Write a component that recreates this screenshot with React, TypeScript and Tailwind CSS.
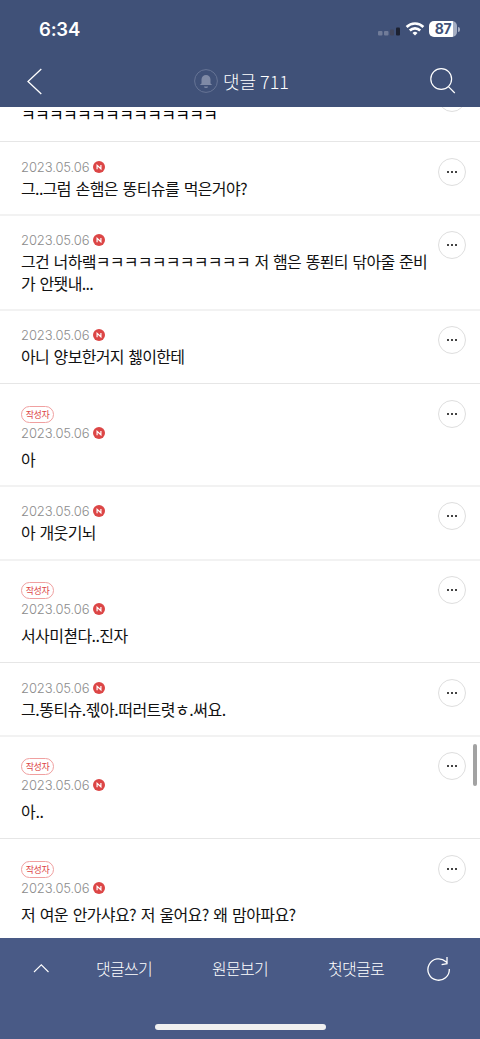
type Comment = {
  height: string;
  text: string;
  writer?: boolean;
  border?: string;
  tracking?: string;
};

const thin = "border-t border-[#e6e6e6]";
const soft = "border-t-2 border-[#f2f2f2]";

const comments: Comment[] = [
  { height: "h-[73px]", border: thin, text: "그..그럼 손햄은 똥티슈를 먹은거야?", tracking: "tracking-[-0.62px]" },
  {
    height: "h-[95px]",
    border: soft,
    text: "그건 너하랰ㅋㅋㅋㅋㅋㅋㅋㅋㅋㅋㅋ 저 햄은 똥푄티 닦아줄 준비\n가 안됏내...",
  },
  { height: "h-[74px]", border: soft, text: "아니 양보한거지 쳃이한테" },
  { height: "h-[102px]", border: thin, text: "아", writer: true },
  { height: "h-[74px]", border: soft, text: "아 개웃기뇌" },
  { height: "h-[103px]", border: soft, text: "서사미쳗다..진자", writer: true, tracking: "tracking-[-0.6px]" },
  { height: "h-[73px]", border: thin, text: "그.똥티슈.젟아.떠러트렷ㅎ.써요.", tracking: "tracking-[-0.5px]" },
  { height: "h-[103px]", border: soft, text: "아..", writer: true, tracking: "tracking-[-0.3px]" },
  {
    height: "h-[100px]",
    border: thin,
    text: "저 여운 안가샤요? 저 울어요? 왜 맘아파요?",
    writer: true,
    tracking: "tracking-[-0.62px]",
  },
];

function MoreButton() {
  return (
    <button className="flex h-7 w-7 shrink-0 items-center justify-center gap-[2px] rounded-full border border-[#dedede]">
      <span className="h-[2px] w-[2px] bg-[#444]" />
      <span className="h-[2px] w-[2px] bg-[#444]" />
      <span className="h-[2px] w-[2px] bg-[#444]" />
    </button>
  );
}

function NewIcon() {
  return (
    <svg width="12" height="12" viewBox="0 0 12 12" fill="none">
      <circle cx="6" cy="6" r="6" fill="#dc4646" />
      <path d="M4.1 8.2V4.4L7.9 7.8V4" stroke="#fff" strokeWidth="1.2" />
    </svg>
  );
}

function CommentItem({ height, text, writer, border, tracking = "tracking-[-0.7px]" }: Comment) {
  return (
    <li className={`shrink-0 ${height}`}>
      <div className={`h-[2px] ${border}`} />
      <div className="flex justify-between pl-[21px] pr-[14px]">
        <div className={writer ? "pt-[21px]" : "pt-[14px]"}>
          {writer && (
            <span className="flex h-[17px] w-[33px] items-center justify-center rounded-full border border-[#f0a0a0] text-[9px] leading-none tracking-[-0.5px] text-[#dc4646]">
              작성자
            </span>
          )}
          <div className="flex h-5 items-center gap-1">
            <span className="w-[68px] font-[Inter] text-[13px] leading-5 font-light tracking-[-0.1px] text-[#8c8c8c]">
              2023.05.06
            </span>
            <NewIcon />
          </div>
          <p
            className={`text-[16px] leading-[22px] [word-spacing:1.7px] whitespace-pre text-[#111] ${tracking} ${
              writer ? "mt-[5px]" : ""
            }`}
          >
            {text}
          </p>
        </div>
        <div className="pt-[15px]">
          <MoreButton />
        </div>
      </div>
    </li>
  );
}

function StatusBar() {
  return (
    <div className="flex h-[58px] items-center justify-between pr-[20px] pl-[39px]">
      <span className="font-[Inter] text-[18.5px] leading-none font-semibold tracking-[-0.2px]">6:34</span>
      <div className="flex items-center">
        <svg width="23" height="16" viewBox="0 0 23 16">
          <rect x="0" y="10" width="4.5" height="4.5" rx="1" fill="#717c99" />
          <rect x="6" y="10" width="4.5" height="4.5" rx="1" fill="#717c99" />
          <rect x="12" y="8.5" width="4" height="6" rx="1" fill="#43485f" />
          <rect x="18" y="6.5" width="4" height="8" rx="1" fill="#1c2131" />
        </svg>
        <svg className="ml-[4px]" width="20" height="16" viewBox="0 0 20 16" fill="none" stroke="#fff" strokeWidth="2.6">
          <path d="M1.6 6a12 12 0 0 1 16.8 0" />
          <path d="M4.8 9.5a7.4 7.4 0 0 1 10.4 0" />
          <path d="M10 14.4 7.5 11.9a3.6 3.6 0 0 1 5 0z" fill="#fff" stroke="none" />
        </svg>
        <div className="ml-[4px] flex h-4 w-[28px] items-center justify-center rounded-[5px] bg-linear-to-r from-white from-87% to-[#a4adc2] to-87% font-[Inter] text-[14px] leading-none font-bold tracking-[-0.3px] text-[#405178]">
          87
        </div>
        <div className="ml-[1px] h-[5px] w-[2px] rounded-r-full bg-[#a4adc2]" />
      </div>
    </div>
  );
}

function Header() {
  return (
    <header className="h-[107px] shrink-0 bg-[#405178] text-white">
      <StatusBar />
      <div className="flex h-[46px] items-center justify-between pr-[24px] pl-[27px]">
        <svg width="26" height="28" viewBox="0 0 26 28" fill="none" stroke="#fff" strokeWidth="1.3">
          <path d="M14.3 2 1 14.5 14.3 27" />
        </svg>
        <h1 className="flex items-center gap-[5px] text-[18px] leading-6 font-light">
          <svg width="24" height="24" viewBox="0 0 24 24">
            <circle cx="12" cy="12" r="11.4" fill="none" stroke="#667495" />
            <path d="M7.5 14.5V10.5a4.5 4.5 0 0 1 9 0v4l1.3 1v.6H6.2v-.6zM10 17.4h4a2 1.6 0 0 1-4 0z" fill="#7f8aa6" />
          </svg>
          <span className="whitespace-pre">댓글 711</span>
        </h1>
        <svg width="26" height="26" viewBox="0 0 26 26" fill="none" stroke="#fff" strokeWidth="1.2">
          <circle cx="11.2" cy="11" r="10.4" />
          <path d="M18.2 18.4 24.8 25" />
        </svg>
      </div>
    </header>
  );
}

function BottomBar() {
  return (
    <footer className="flex h-[101px] shrink-0 flex-col items-center bg-[#495a86] text-white">
      <nav className="flex h-[62px] w-full items-center pl-[33px] text-[16px] font-light tracking-[-0.7px]">
        <svg width="16" height="10" viewBox="0 0 16 10" fill="none" stroke="#fff" strokeWidth="1.1">
          <path d="M1 8 8.3 .8 15.5 8" />
        </svg>
        <span className="mb-[2px] ml-[47px] w-[116px]">댓글쓰기</span>
        <span className="mb-[2px] w-[116px]">원문보기</span>
        <span className="mb-[2px] w-[99px]">첫댓글로</span>
        <svg width="24" height="26" viewBox="0 0 24 26" fill="none" stroke="#fff" strokeWidth="1.3">
          <path d="M22.3 13a10.7 10.7 0 1 1-3.3-7.2l1.5 1.6M20 1v6.6l-5.4 1" />
        </svg>
      </nav>
      <div className="mt-[24px] h-[6px] w-[171px] rounded-full bg-[#f0f0f0]" />
    </footer>
  );
}

export default function App() {
  return (
    <div className="relative flex h-[1039px] w-[480px] flex-col overflow-hidden bg-white font-['Noto_Sans_CJK_KR',sans-serif]">
      <Header />
      <main className="min-h-0 flex-1 overflow-hidden">
        <div className="flex h-[34px] items-end justify-between overflow-hidden pr-[14px] pl-[21px]">
          <p className="mb-[16px] text-[16px] leading-[22px] tracking-[-0.7px]">ㅋㅋㅋㅋㅋㅋㅋㅋㅋㅋㅋㅋㅋㅋ</p>
          <div className="mb-[29px]">
            <MoreButton />
          </div>
        </div>
        <ul className="flex flex-col">
          {comments.map((comment, i) => (
            <CommentItem key={i} {...comment} />
          ))}
        </ul>
      </main>
      <BottomBar />
      <div className="absolute top-[744px] right-[3px] h-[42px] w-[4px] rounded-full bg-[#a2a2a2]" />
    </div>
  );
}
